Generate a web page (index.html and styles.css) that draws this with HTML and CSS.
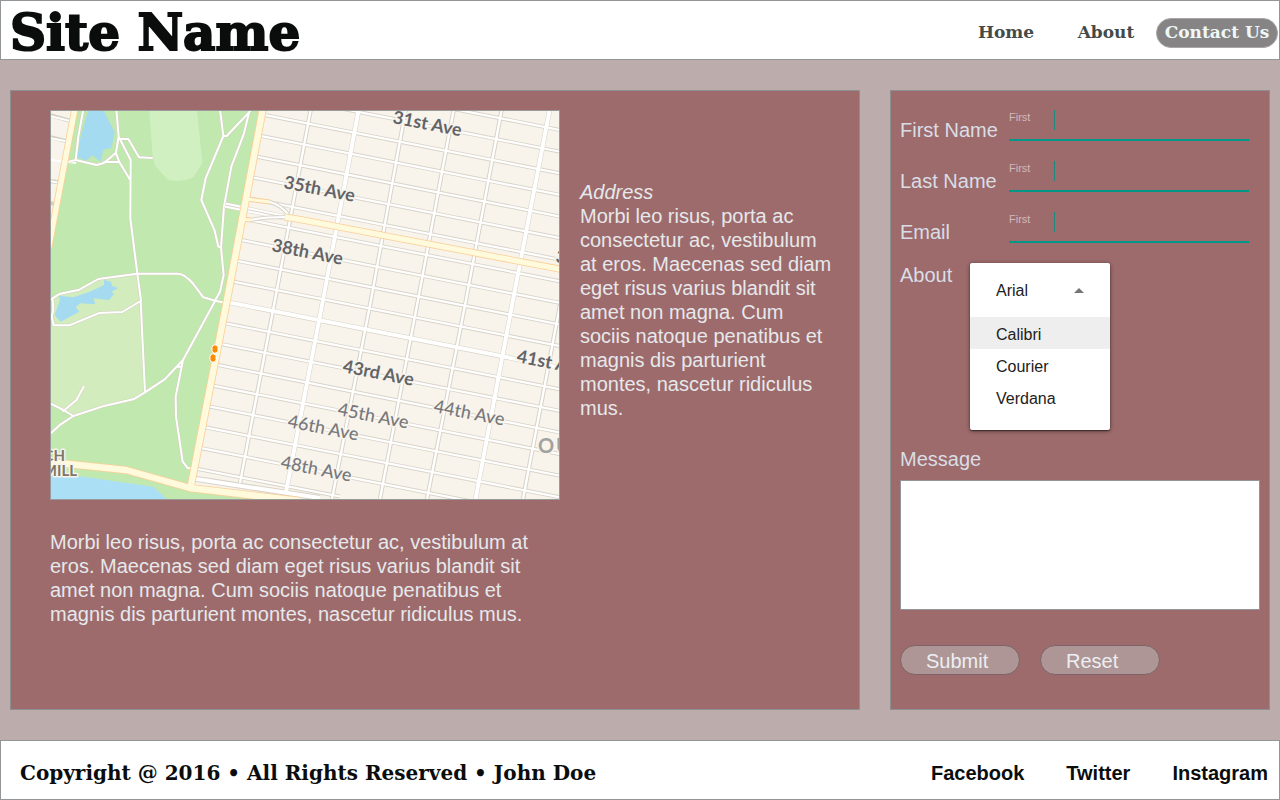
FILE: index.html
```html
<!DOCTYPE html>
<html lang="en">
<head>
<meta charset="utf-8">
<meta name="viewport" content="width=device-width, initial-scale=1">
<title>Contact Us</title>
<link rel="stylesheet" href="styles.css">
</head>
<body>
<header class="site-header">
  <h1 class="site-name">Site Name</h1>
  <nav class="site-nav">
    <a href="#home">Home</a>
    <a href="#about">About</a>
    <a href="#contact" class="current" aria-current="page">Contact Us</a>
  </nav>
</header>

<main class="content">
  <section class="panel location">
    <figure class="map">
      <svg viewBox="51 111 508 388" role="img" aria-label="Street map">
        <defs>
          <clipPath id="city"><path d="M263 108H562V502H300L190 488z"/></clipPath>
          <path id="avenues" d="M190 57l370 73M190 78.700l370 73M190 100.300l370 73M190 121.900l370 73M190 143.500l370 73M190 165.100l370 73M190 186.700l370 73M190 208.300l370 73M190 229.900l370 73M190 251.500l370 73M190 273.100l370 73M190 316.300l370 73M190 337.900l370 73M190 359.500l370 73M190 381.100l370 73M190 402.700l370 73M190 424.300l370 73M190 445.900l370 73M190 467.500l150 29"/>
          <path id="streets" d="M311 108L275 300L240 483M406 108L371 300L332 499M454 108L418 300L380 499M502 108L466 300L427 499M561 300L523 499"/>
          <path id="wide" d="M190 294.700l370 73M359 108L323 300L286 492M550 108L513 300L475 502"/>
          <g id="paths" fill="none" stroke-linejoin="round" stroke-linecap="round">
            <g transform="translate(40 100) scale(.33333)">
              <path d="M130 28L115 110L107 180M75 188L107 180L170 195L192 189L228 158L236 110L229 28M192 186L238 186M228 160L238 186L272 242M236 110L272 180L271 355L292 520L303 602M240 117H265L297 172L336 174M540 28L550 108L497 235L484 300L524 392L535 440L543 443M550 108H560L632 32M628 34L612 100L574 200L552 320L543 443L551 525L540 575L526 600M555 315L610 325M28 602L58 582L118 569L175 537L292 521H412Q435 521 460 552L490 592L526 602L560 610"/>
            </g>
            <g transform="translate(40 300) scale(.33333)">
              <path d="M38 0L40 30L35 50L41 76H88L178 39L247 36L302 3L315 277M524 5L429 180L374 238L315 277L280 298L195 317L100 348L62 373L30 402M30 309L70 330L100 348M70 333L110 299L131 260M429 180L422 215L407 290L408 350L428 485L444 505H455M411 200H425"/>
            </g>
          </g>
        </defs>
        <rect x="50" y="110" width="510" height="390" fill="#c1e8ae"/>
        <path d="M50 110H75L50 250z" fill="#f8f4ec"/>
        <path d="M263 108H562V502H300L190 488z" fill="#f8f4ec"/>

        <g transform="translate(40 100) scale(.33333)">
          <path d="M328 30H471L487 188L460 232Q425 249 383 239L346 198L338 170z" fill="#d1f0c1"/>
          <path d="M145 30H190L224 97L214 144L190 149L182 185L157 166L139 182L112 172L120 118z" fill="#a4dbf1"/>
        </g>
        <g transform="translate(40 300) scale(.33333)">
          <path d="M33 -5L58 -18L118 -31L175 -63L292 -79L315 277L280 298L195 317L100 348L33 309z" fill="#d2ecbd"/>
          <path d="M60 0L56 -13L100 -8L150 -25L192 -45V-60L213 -55L216 -42L235 -36L215 -25L222 -18L207 0L160 -5L166 13L121 10L107 21L118 35L62 65L44 46z" fill="#a4dbf1"/>
          <path d="M30 523L130 530L340 560L383 600H30z" fill="#abdff5"/>
        </g>

        <g fill="none">
          <path d="M50 115l24 7M50 137l20 5M50 181l14 2M50 203l10 2" stroke="#d5d0c4" stroke-width="4"/>
          <path d="M50 116l24 6M50 138l20 4M50 160l26 3M50 181l10 2" stroke="#fff" stroke-width="2"/>
          <use href="#paths" stroke="#d3cfc0" stroke-width="9"/>
          <use href="#paths" stroke="#fff" stroke-width="6"/>
        </g>

        <g fill="none" clip-path="url(#city)">
          <g stroke="#d8d3c8">
            <use href="#avenues" stroke-width="4"/>
            <use href="#streets" stroke-width="4.400"/>
            <use href="#wide" stroke-width="5"/>
            <path d="M190 478L320 498" stroke-width="6"/>
          </g>
          <g stroke="#fff">
            <use href="#avenues" stroke-width="2.200"/>
            <use href="#streets" stroke-width="2.400"/>
            <use href="#wide" stroke-width="4"/>
            <path d="M190 478L320 498" stroke-width="4"/>
          </g>
        </g>

        <g fill="none" stroke-linejoin="round">
          <path d="M225 205L288 218" stroke="#d8d3c8" stroke-width="6"/>
          <path d="M225 205L288 218" stroke="#fff" stroke-width="5"/>
          <path d="M225 205L288 218" stroke="#d8d3c8" stroke-width="1"/>
          <path d="M270 202Q282 205 290 217M250 220Q265 217 286 217" stroke="#d8d3c8" stroke-width="4"/>
          <path d="M270 202Q282 205 290 217M250 220Q265 217 286 217" stroke="#fff" stroke-width="2"/>
          <g stroke="#fbcf98">
            <path d="M75 108L46 262M285 217L300 219.500L562 269.500" stroke-width="7"/>
            <path d="M246 199L270 202M239 219L251 220" stroke-width="5"/>
            <path d="M263 108L227 300L190.500 488M48 462L78 465L126 470L190 488L300 501" stroke-width="8"/>
          </g>
          <g stroke="#fefadb">
            <path d="M75 108L46 262M285 217L300 219.500L562 269.500" stroke-width="5.400"/>
            <path d="M246 199L270 202M239 219L251 220" stroke-width="3"/>
            <path d="M263 108L227 300L190.500 488M48 462L78 465L126 470L190 488L300 501" stroke-width="6.400"/>
          </g>
          <g fill="#ff8a00" stroke="#fff" stroke-width="1">
            <rect x="212" y="345" width="6" height="8" rx="2.500"/>
            <rect x="210" y="354" width="6" height="8" rx="2.500"/>
          </g>
        </g>

        <g class="map-label major">
          <text transform="translate(392 123) rotate(11)">31st Ave</text>
          <text transform="translate(283 188) rotate(11)">35th Ave</text>
          <text transform="translate(271 251) rotate(11)">38th Ave</text>
          <text transform="translate(342 372) rotate(11)">43rd Ave</text>
          <text transform="translate(516 362) rotate(11)">41st Ave</text>
          <text transform="translate(555 262) rotate(11)">39th Ave</text>
        </g>
        <g class="map-label minor">
          <text transform="translate(337 415) rotate(11)">45th Ave</text>
          <text transform="translate(433 412) rotate(11)">44th Ave</text>
          <text transform="translate(287 427) rotate(11)">46th Ave</text>
          <text transform="translate(280 468) rotate(11)">48th Ave</text>
        </g>
        <text class="map-label district" x="538 556" y="453">OU</text>
        <g class="map-label place" text-anchor="end">
          <text x="65" y="461">CH</text>
          <text x="77" y="476">MILL</text>
        </g>
      </svg>
    </figure>
    <address class="address"><em>Address</em><br>Morbi leo risus, porta ac consectetur ac, vestibulum at eros. Maecenas sed diam eget risus varius blandit sit amet non magna. Cum sociis natoque penatibus et magnis dis parturient montes, nascetur ridiculus mus.</address>
    <p class="summary">Morbi leo risus, porta ac consectetur ac, vestibulum at eros. Maecenas sed diam eget risus varius blandit sit amet non magna. Cum sociis natoque penatibus et magnis dis parturient montes, nascetur ridiculus mus.</p>
  </section>

  <form class="panel contact-form">
    <div class="row">
      <label for="first-name">First Name</label>
      <span class="field"><input id="first-name" type="text" placeholder="First"></span>
    </div>
    <div class="row">
      <label for="last-name">Last Name</label>
      <span class="field"><input id="last-name" type="text" placeholder="First"></span>
    </div>
    <div class="row">
      <label for="email">Email</label>
      <span class="field"><input id="email" type="email" placeholder="First"></span>
    </div>
    <div class="about-row">
      <label for="about">About</label>
      <div class="dropdown">
        <div class="dropdown-head">
          <select id="about">
            <option>Arial</option>
            <option>Calibri</option>
            <option>Courier</option>
            <option>Verdana</option>
          </select>
          <svg class="arrow" viewBox="0 0 10 5" aria-hidden="true"><path d="M0 5L5 0L10 5z" fill="#757575"/></svg>
        </div>
        <ul class="options" role="listbox" aria-label="About">
          <li role="option" aria-selected="true" class="active">Calibri</li>
          <li role="option" aria-selected="false">Courier</li>
          <li role="option" aria-selected="false">Verdana</li>
        </ul>
      </div>
    </div>
    <label class="message-label" for="message">Message</label>
    <textarea id="message"></textarea>
    <div class="actions">
      <button type="submit">Submit</button>
      <button type="reset">Reset</button>
    </div>
  </form>
</main>

<footer class="site-footer">
  <p class="copyright">Copyright @ 2016 • All Rights Reserved • John Doe</p>
  <nav class="social">
    <a href="#facebook">Facebook</a>
    <a href="#twitter">Twitter</a>
    <a href="#instagram">Instagram</a>
  </nav>
</footer>
</body>
</html>
```

FILE: styles.css
```css
* {
  box-sizing: border-box;
}

body {
  display: flex;
  flex-direction: column;
  min-height: 100vh;
  margin: 0;
  background: #bcadac;
  color: #e6e8eb;
  font: 20px/24px "Liberation Sans", Arial, sans-serif;
}

a {
  color: inherit;
  text-decoration: none;
}

.site-header,
.site-footer {
  display: flex;
  align-items: center;
  justify-content: space-between;
  min-height: 60px;
  border: 1px solid #929699;
  background: #fff;
  color: #0b0d0d;
}

.site-header {
  padding: 0 1px 0 9px;
}

.site-name {
  margin: 0;
  padding-top: 6px;
  font: bold 50px/50px Rockwell, "DejaVu Serif", serif;
  -webkit-text-stroke: 2px currentColor;
}

.site-nav {
  display: flex;
  padding-top: 6px;
  color: #434b4a;
  font: bold 17px/28px Rockwell, "DejaVu Serif", serif;
}

.site-nav a {
  width: 100px;
  height: 30px;
  text-align: center;
}

.site-nav .current {
  width: 122px;
  border: 1px solid #a8a6a6;
  border-radius: 15px;
  background: #868484;
  color: #eef8f8;
  line-height: 26px;
}

.content {
  display: grid;
  flex: 1;
  grid-template-columns: minmax(0, 85fr) minmax(0, 38fr);
  gap: 30px;
  padding: 30px 10px;
}

.panel {
  border: 1px solid #8f8f93;
  background: #9d6b6b;
}

.location {
  display: grid;
  grid-template-columns: minmax(0, 51fr) minmax(0, 26fr);
  align-content: start;
  gap: 30px 20px;
  padding: 19px 19px 19px 39px;
}

.map {
  margin: 0;
  border: 1px solid #9a9a9a;
}

.map svg {
  display: block;
  width: 100%;
  height: auto;
}

.map-label {
  font-family: Lato, sans-serif;
  font-size: 18px;
  stroke: #f8f4ec;
  stroke-width: 3px;
  stroke-linejoin: round;
  paint-order: stroke;
}

.major {
  font-weight: bold;
  fill: #636467;
}

.minor {
  font-weight: 500;
  fill: #77787b;
}

.district {
  font-size: 20px;
  font-weight: bold;
  fill: #a3a29f;
}

.place {
  font-size: 15px;
  font-weight: bold;
  fill: #7c7869;
}

.address {
  padding: 70px 6px 0 0;
  font-style: normal;
}

.summary {
  margin: 0;
}

.contact-form {
  padding: 19px 9px;
  color: #d9dee6;
}

.row {
  display: flex;
  height: 31px;
  margin-bottom: 20px;
  padding-right: 11px;
}

.row label {
  width: 109px;
  padding-top: 8px;
}

.field {
  position: relative;
  flex: 1;
  height: 31px;
}

.field::after {
  position: absolute;
  top: 0;
  left: 45px;
  width: 1px;
  height: 20px;
  background: #1d8a7f;
  content: "";
}

.field input {
  display: block;
  width: 100%;
  height: 31px;
  padding: 0 0 16px;
  border: 0;
  border-bottom: 2px solid #009688;
  outline: 0;
  background: none;
  color: #fff;
  font: 11px/13px "Liberation Sans", Arial, sans-serif;
}

.field input::placeholder {
  color: #d3b9b9;
  opacity: 1;
}

.about-row {
  display: flex;
  align-items: flex-start;
}

.about-row label {
  width: 70px;
}

.dropdown {
  width: 140px;
  padding-bottom: 17px;
  border-radius: 2px;
  background: #fff;
  box-shadow: 0 1px 4px rgba(0, 0, 0, .5), 0 1px 1px rgba(0, 0, 0, .4);
  color: #212121;
  font-size: 16px;
}

.dropdown-head {
  position: relative;
}

.dropdown select {
  display: block;
  width: 100%;
  height: 54px;
  padding: 2px 26px 0;
  border: 0;
  outline: 0;
  appearance: none;
  background: none;
  color: inherit;
  font: inherit;
}

.arrow {
  position: absolute;
  top: 25px;
  right: 26px;
  width: 10px;
  height: 5px;
  pointer-events: none;
}

.options {
  margin: 0;
  padding: 0;
  list-style: none;
}

.options li {
  height: 32px;
  padding: 0 26px;
  line-height: 36px;
}

.options .active {
  background: #eee;
}

.message-label {
  display: block;
  margin: 17px 0 9px;
}

.contact-form textarea {
  display: block;
  width: 100%;
  height: 130px;
  border: 1px solid #929699;
  border-radius: 0;
  outline: 0;
  background: #fff;
  font: inherit;
  resize: none;
}

.actions {
  display: flex;
  gap: 20px;
  margin-top: 35px;
}

.actions button {
  width: 120px;
  height: 30px;
  padding: 2px 25px 0;
  border: 1px solid #7b6467;
  border-radius: 15px;
  background: #ae9696;
  color: #eceef2;
  font: inherit;
  text-align: left;
}

.site-footer {
  padding: 6px 11px 0 19px;
}

.copyright {
  margin: 0;
  font: bold 20px/24px Rockwell, "DejaVu Serif", serif;
}

.social {
  display: flex;
  gap: 42px;
  font-weight: bold;
}
```
